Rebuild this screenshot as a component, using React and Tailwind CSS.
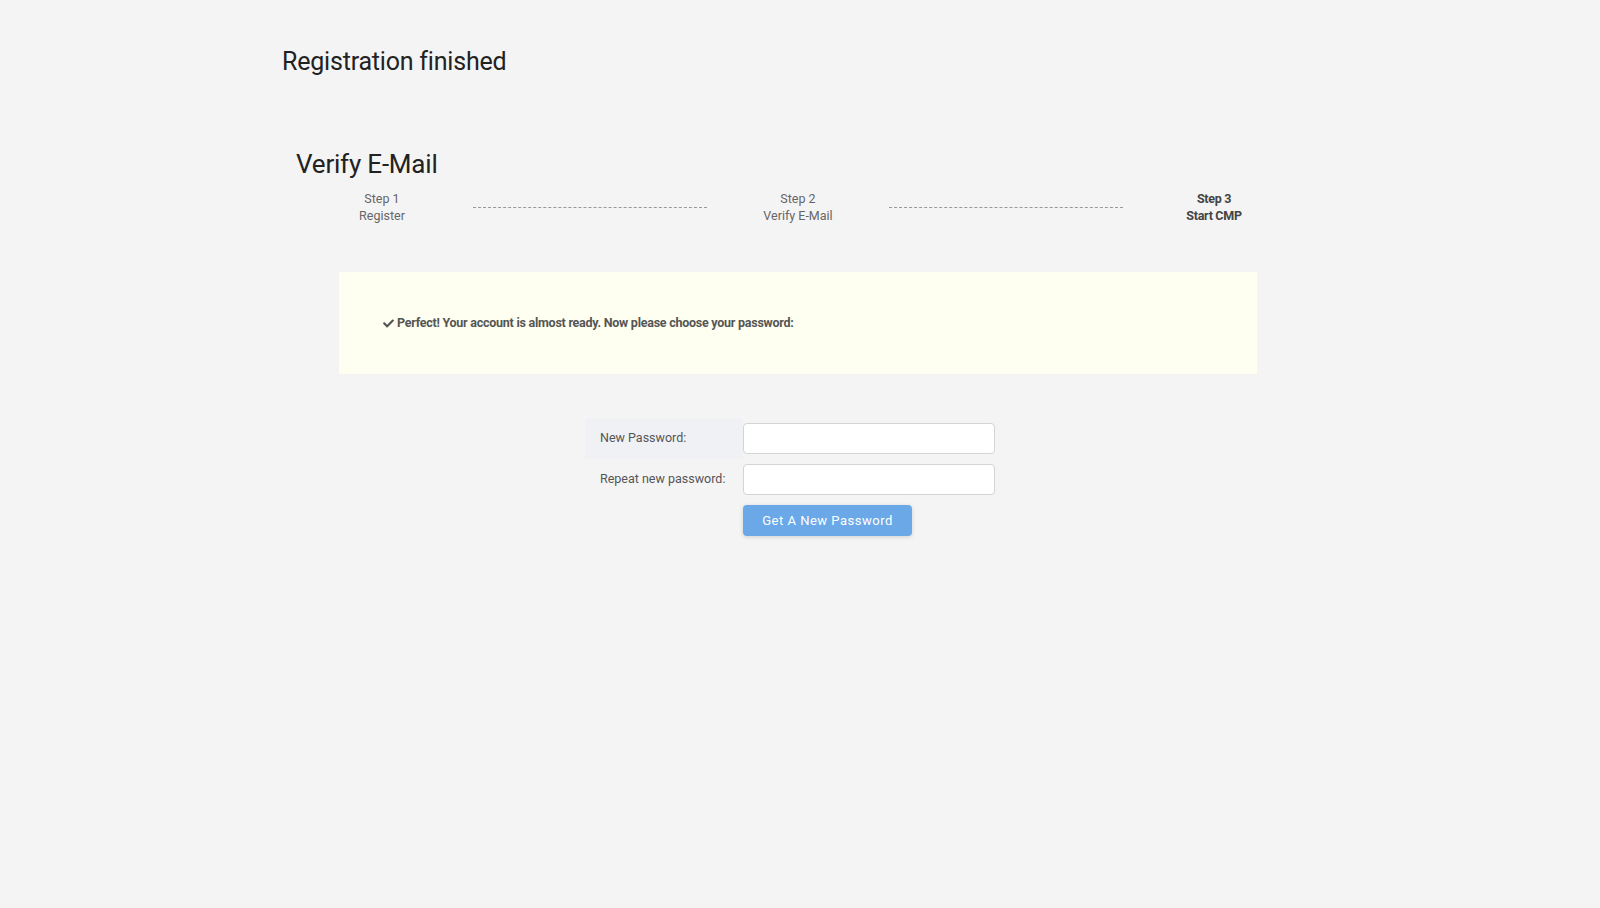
function StepItem({ step, label, active }) {
  return (
    <div
      className={`w-[182px] shrink-0 text-center text-[12.5px] leading-[17px] ${
        active ? "font-bold text-[#444] tracking-[-0.3px]" : "text-[#666]"
      }`}
    >
      <p>{step}</p>
      <p>{label}</p>
    </div>
  );
}

function StepLine() {
  return (
    <div className="flex-1 self-center border-t border-dashed border-[#999]" />
  );
}

function CheckIcon() {
  return (
    <svg
      viewBox="0 0 512 512"
      className="w-[11px] h-[11px] fill-[#555]"
    >
      <path d="M173.9 439.4l-166.4-166.4c-10-10-10-26.2 0-36.2l36.2-36.2c10-10 26.2-10 36.2 0L192 312.7 432.1 72.6c10-10 26.2-10 36.2 0l36.2 36.2c10 10 10 26.2 0 36.2L210.1 439.4c-10 10-26.2 10-36.2 0z" />
    </svg>
  );
}

export default function App() {
  return (
    <div className="min-h-[908px] bg-[#f4f4f5] font-['Roboto',sans-serif] text-[#333]">
      <div className="ml-[282px] w-[1032px] pt-[45px]">

        <h1 className="text-[25px] leading-[34px] text-[#222] tracking-[-0.2px]">
          Registration finished
        </h1>

        <h2 className="mt-[68px] ml-[14px] text-[26px] leading-[34px] text-[#222] tracking-[-0.2px]">
          Verify E-Mail
        </h2>

        <div className="flex mt-[9px] ml-[9px] w-[1014px]">
          <StepItem step="Step 1" label="Register" />
          <StepLine />
          <StepItem step="Step 2" label="Verify E-Mail" />
          <StepLine />
          <StepItem step="Step 3" label="Start CMP" active />
        </div>

        <div className="mt-[48px] ml-[57px] w-[918px] h-[102px] bg-[#fefff0] flex items-center pl-[44px]">
          <p className="flex items-center gap-[3px] text-[12.5px] font-bold text-[#555] tracking-[-0.25px]">
            <CheckIcon />
            Perfect! Your account is almost ready. Now please choose your password:
          </p>
        </div>

        <div className="mt-[49px] ml-[315px] flex flex-col gap-[10px] text-[12.5px] text-[#555]">
          <div className="flex items-center">
            <div className="w-[158px] h-[40px] -my-[4.5px] -ml-[12px] pl-[15px] flex items-center bg-[#f0f1f4]">
              New Password:
            </div>
            <input
              type="password"
              className="w-[252px] h-[31px] bg-white border border-[#d4d4d4] rounded-[4px]"
            />
          </div>

          <div className="flex items-center">
            <div className="w-[146px] pl-[3px]">
              Repeat new password:
            </div>
            <input
              type="password"
              className="w-[252px] h-[31px] bg-white border border-[#d4d4d4] rounded-[4px]"
            />
          </div>

          <div className="ml-[146px]">
            <button className="w-[169px] h-[31px] rounded-[4px] bg-[#6aa8e8] text-white text-[13px] tracking-[0.5px] shadow-[0_1px_4px_rgba(0,0,0,0.15)]">
              Get A New Password
            </button>
          </div>
        </div>

      </div>
    </div>
  );
}
